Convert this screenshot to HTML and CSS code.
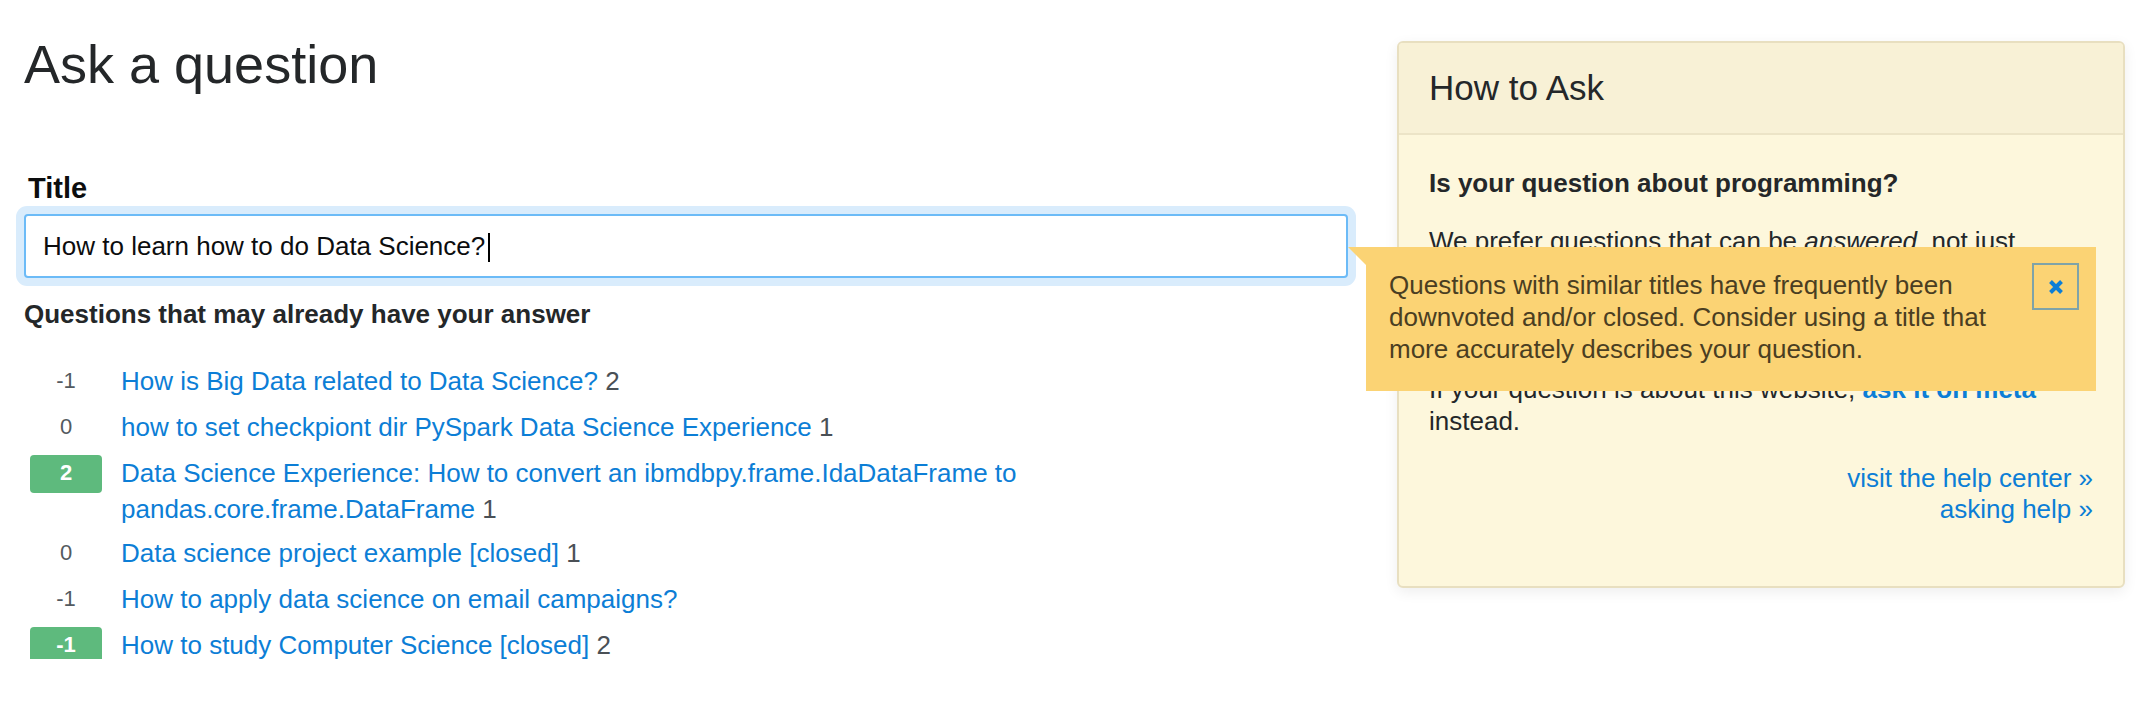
FILE: index.html
```html
<!DOCTYPE html>
<html lang="en">
<head>
<meta charset="utf-8">
<title>Ask a question</title>
<link rel="stylesheet" href="styles.css">
</head>
<body>
<div class="page">
  <main class="main">
    <h1 class="page-title">Ask a question</h1>
    <div class="form">
      <div class="field">
        <label class="label">Title</label>
        <div class="title-input">How to learn how to do Data Science?<span class="caret"></span></div>
        <div class="tooltip">
          <p class="tooltip-text">Questions with similar titles have frequently been downvoted and/or closed. Consider using a title that more accurately describes your question.</p>
          <button class="tooltip-close" type="button" aria-label="close">
            <svg width="16" height="16" viewBox="0 0 16 16"><path d="M2.5 2.5 L13.5 13.5 M13.5 2.5 L2.5 13.5" stroke="#0c7ed6" stroke-width="4" fill="none"/></svg>
          </button>
        </div>
      </div>
      <h2 class="similar-heading">Questions that may already have your answer</h2>
      <div class="similar-list">
        <div class="q-row"><span class="vote">-1</span><span class="q-text"><a class="q-link" href="#">How is Big Data related to Data Science?</a> <span class="count">2</span></span></div>
        <div class="q-row"><span class="vote">0</span><span class="q-text"><a class="q-link" href="#">how to set checkpiont dir PySpark Data Science Experience</a> <span class="count">1</span></span></div>
        <div class="q-row"><span class="vote vote-accepted">2</span><span class="q-text"><a class="q-link" href="#">Data Science Experience: How to convert an ibmdbpy.frame.IdaDataFrame to pandas.core.frame.DataFrame</a> <span class="count">1</span></span></div>
        <div class="q-row"><span class="vote">0</span><span class="q-text"><a class="q-link" href="#">Data science project example [closed]</a> <span class="count">1</span></span></div>
        <div class="q-row"><span class="vote">-1</span><span class="q-text"><a class="q-link" href="#">How to apply data science on email campaigns?</a></span></div>
        <div class="q-row"><span class="vote vote-accepted">-1</span><span class="q-text"><a class="q-link" href="#">How to study Computer Science [closed]</a> <span class="count">2</span></span></div>
      </div>
    </div>
  </main>
  <aside class="sidebar">
    <div class="panel">
      <div class="panel-header">How to Ask</div>
      <div class="panel-body">
        <p class="panel-p panel-strong">Is your question about programming?</p>
        <p class="panel-p">We prefer questions that can be <em>answered</em>, not just discussed.</p>
        <p class="panel-p">Provide details. Share your research.</p>
        <p class="panel-p">If your question is about this website, <a class="meta-link" href="#">ask it on meta</a> instead.</p>
        <p class="panel-p panel-links"><a class="help-link" href="#">visit the help center »</a><br><a class="help-link" href="#">asking help »</a></p>
      </div>
    </div>
  </aside>
</div>
</body>
</html>
```
FILE: styles.css
```css
* { box-sizing: border-box; }
html, body { margin: 0; padding: 0; background: #fff; }
body {
  font-family: "Liberation Sans", Arial, Helvetica, sans-serif;
  color: #242729;
}
.page {
  display: flex;
  align-items: flex-start;
  gap: 49px;
  padding: 29px 29px 0 24px;
}
.main {
  width: 1324px;
  flex: none;
}
.page-title {
  margin: 0;
  font-size: 54px;
  line-height: 70px;
  font-weight: normal;
  color: #242729;
}
.form { margin-top: 71px; }
.field { position: relative; }
.label {
  display: block;
  font-size: 29px;
  line-height: 36px;
  font-weight: bold;
  color: #0c0d0e;
  margin: 0 0 8px 4px;
}
.title-input {
  display: flex;
  align-items: center;
  height: 64px;
  padding: 0 17px;
  border: 2px solid #6cbbf7;
  border-radius: 4px;
  box-shadow: 0 0 0 8px #d9ecfc;
  font-size: 26px;
  color: #0c0d0e;
  background: #fff;
  white-space: pre;
}
.caret {
  display: inline-block;
  width: 2px;
  height: 29px;
  margin-left: 3px;
  background: #000;
  position: relative;
  top: 1px;
}
.tooltip {
  position: absolute;
  left: calc(100% + 18px);
  top: 77px;
  width: 730px;
  display: flex;
  align-items: flex-start;
  gap: 24px;
  padding: 22px 17px 26px 23px;
  background: #fbd374;
  z-index: 5;
}
.tooltip::before {
  content: "";
  position: absolute;
  left: -18px;
  top: 0;
  width: 0;
  height: 0;
  border-top: 18px solid #fbd374;
  border-left: 18px solid transparent;
}
.tooltip-text {
  flex: 1;
  margin: 0;
  font-size: 26px;
  line-height: 32px;
  color: #4a3e22;
}
.tooltip-close {
  flex: none;
  width: 47px;
  height: 47px;
  margin-top: -6px;
  border: 2px solid #7fa3a8;
  background: transparent;
  padding: 0;
  display: flex;
  align-items: center;
  justify-content: center;
}
.similar-heading {
  margin: 20px 0 0 0;
  font-size: 26px;
  line-height: 32px;
  font-weight: bold;
  color: #242729;
}
.similar-list {
  margin-top: 33px;
  height: 296px;
  overflow: hidden;
  padding-left: 6px;
}
.q-row {
  display: flex;
  align-items: flex-start;
  gap: 19px;
  margin-bottom: 8px;
  font-size: 26px;
  line-height: 36px;
}
.vote {
  flex: none;
  width: 72px;
  height: 38px;
  line-height: 36px;
  text-align: center;
  font-size: 22px;
  color: #535a60;
  border-radius: 4px;
}
.vote-accepted {
  background: #5eba7d;
  color: #fff;
  font-weight: bold;
}
.q-link {
  color: #0c7ed6;
  text-decoration: none;
}
.count { color: #4a5056; }
.sidebar {
  width: 728px;
  flex: none;
  margin-top: 12px;
}
.panel {
  border: 2px solid #e8dfc0;
  border-radius: 6px;
  background: #fdf7dc;
  box-shadow: 0 4px 14px rgba(0, 0, 0, 0.07);
  overflow: hidden;
}
.panel-header {
  background: #f8f1d6;
  border-bottom: 2px solid #ece4c7;
  padding: 24px 30px 24px 30px;
  font-size: 35px;
  line-height: 42px;
  color: #242729;
}
.panel-body {
  padding: 32px 30px 35px 30px;
}
.panel-p {
  margin: 0 0 26px 0;
  font-size: 26px;
  line-height: 32px;
  color: #242729;
}
.panel-strong { font-weight: bold; }
.meta-link {
  color: #0c7ed6;
  font-weight: bold;
  text-decoration: none;
}
.panel-links {
  text-align: right;
  line-height: 31px;
}
.help-link {
  color: #0c7ed6;
  text-decoration: none;
}
```
